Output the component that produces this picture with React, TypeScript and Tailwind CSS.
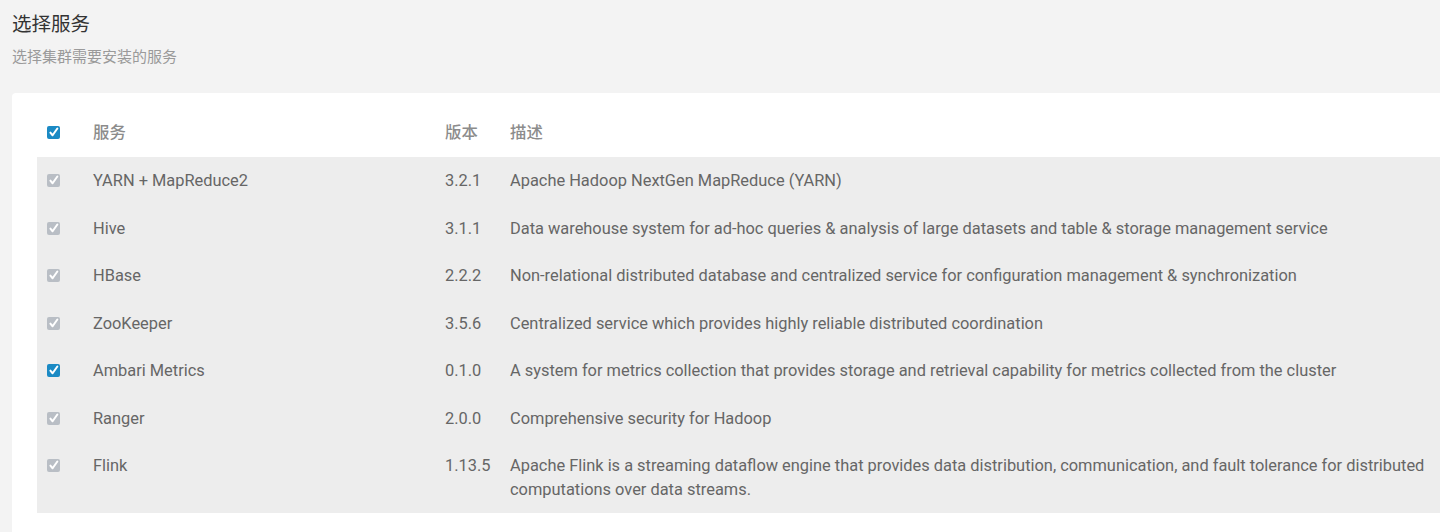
import React from "react";

interface Service {
  name: string;
  version: string;
  description: string;
  editable?: boolean;
}

const SERVICES: Service[] = [
  { name: "YARN + MapReduce2", version: "3.2.1", description: "Apache Hadoop NextGen MapReduce (YARN)" },
  { name: "Hive", version: "3.1.1", description: "Data warehouse system for ad-hoc queries & analysis of large datasets and table & storage management service" },
  { name: "HBase", version: "2.2.2", description: "Non-relational distributed database and centralized service for configuration management & synchronization" },
  { name: "ZooKeeper", version: "3.5.6", description: "Centralized service which provides highly reliable distributed coordination" },
  { name: "Ambari Metrics", version: "0.1.0", description: "A system for metrics collection that provides storage and retrieval capability for metrics collected from the cluster", editable: true },
  { name: "Ranger", version: "2.0.0", description: "Comprehensive security for Hadoop" },
  { name: "Flink", version: "1.13.5", description: "Apache Flink is a streaming dataflow engine that provides data distribution, communication, and fault tolerance for distributed computations over data streams." },
];

function Check({ active }: { active: boolean }) {
  return (
    <span
      className={
        "flex h-[13px] w-[13px] items-center justify-center rounded-[2px] " +
        (active ? "bg-[#1b8ac4]" : "bg-[#b9bec5]")
      }
    >
      <svg viewBox="0 0 12 12" className="h-[11px] w-[11px]" fill="none">
        <path d="M2.6 6.2 L5 9 L10.2 1.6" stroke="white" strokeWidth="2.2" strokeLinecap="round" strokeLinejoin="round" />
      </svg>
    </span>
  );
}

export default function App() {
  return (
    <div
      className="h-[532px] w-[1440px] overflow-hidden bg-[#f3f3f3]"
      style={{ fontFamily: "Roboto, 'Noto Sans CJK SC', sans-serif" }}
    >
      <div className="px-3 pt-[12px]">
        <h2 className="text-[19.5px] leading-[26px] font-normal text-[#333]">选择服务</h2>
        <p className="mt-[9px] text-[15px] leading-[20px] text-[#9a9a9a]">选择集群需要安装的服务</p>
      </div>

      <div className="mt-[26px] ml-3 rounded-tl-[4px] bg-white pt-[17px] pl-[25px] pb-6">
        <table className="w-full border-collapse text-[16.4px] text-[#666]">
          <thead>
            <tr className="h-[47px]">
              <th className="w-[46px] pl-[10px] pb-[3px] text-left align-middle">
                <Check active />
              </th>
              <th className="w-[352px] pl-[10px] text-left font-medium text-[#8c8c8c]">服务</th>
              <th className="w-[65px] pl-[10px] text-left font-medium text-[#8c8c8c]">版本</th>
              <th className="pl-[10px] text-left font-medium text-[#8c8c8c]">描述</th>
            </tr>
          </thead>
          <tbody className="bg-[#ededed]">
            {SERVICES.map((s) => (
              <tr key={s.name} className="align-top">
                <td className="pl-[10px] pt-[17px]">
                  <Check active={!!s.editable} />
                </td>
                <td className="py-[12px] pl-[10px] leading-[23.5px]">{s.name}</td>
                <td className="py-[12px] pl-[10px] leading-[23.5px]">{s.version}</td>
                <td className="py-[12px] pl-[10px] pr-[8px] leading-[23.5px]">{s.description}</td>
              </tr>
            ))}
          </tbody>
        </table>
      </div>
    </div>
  );
}
